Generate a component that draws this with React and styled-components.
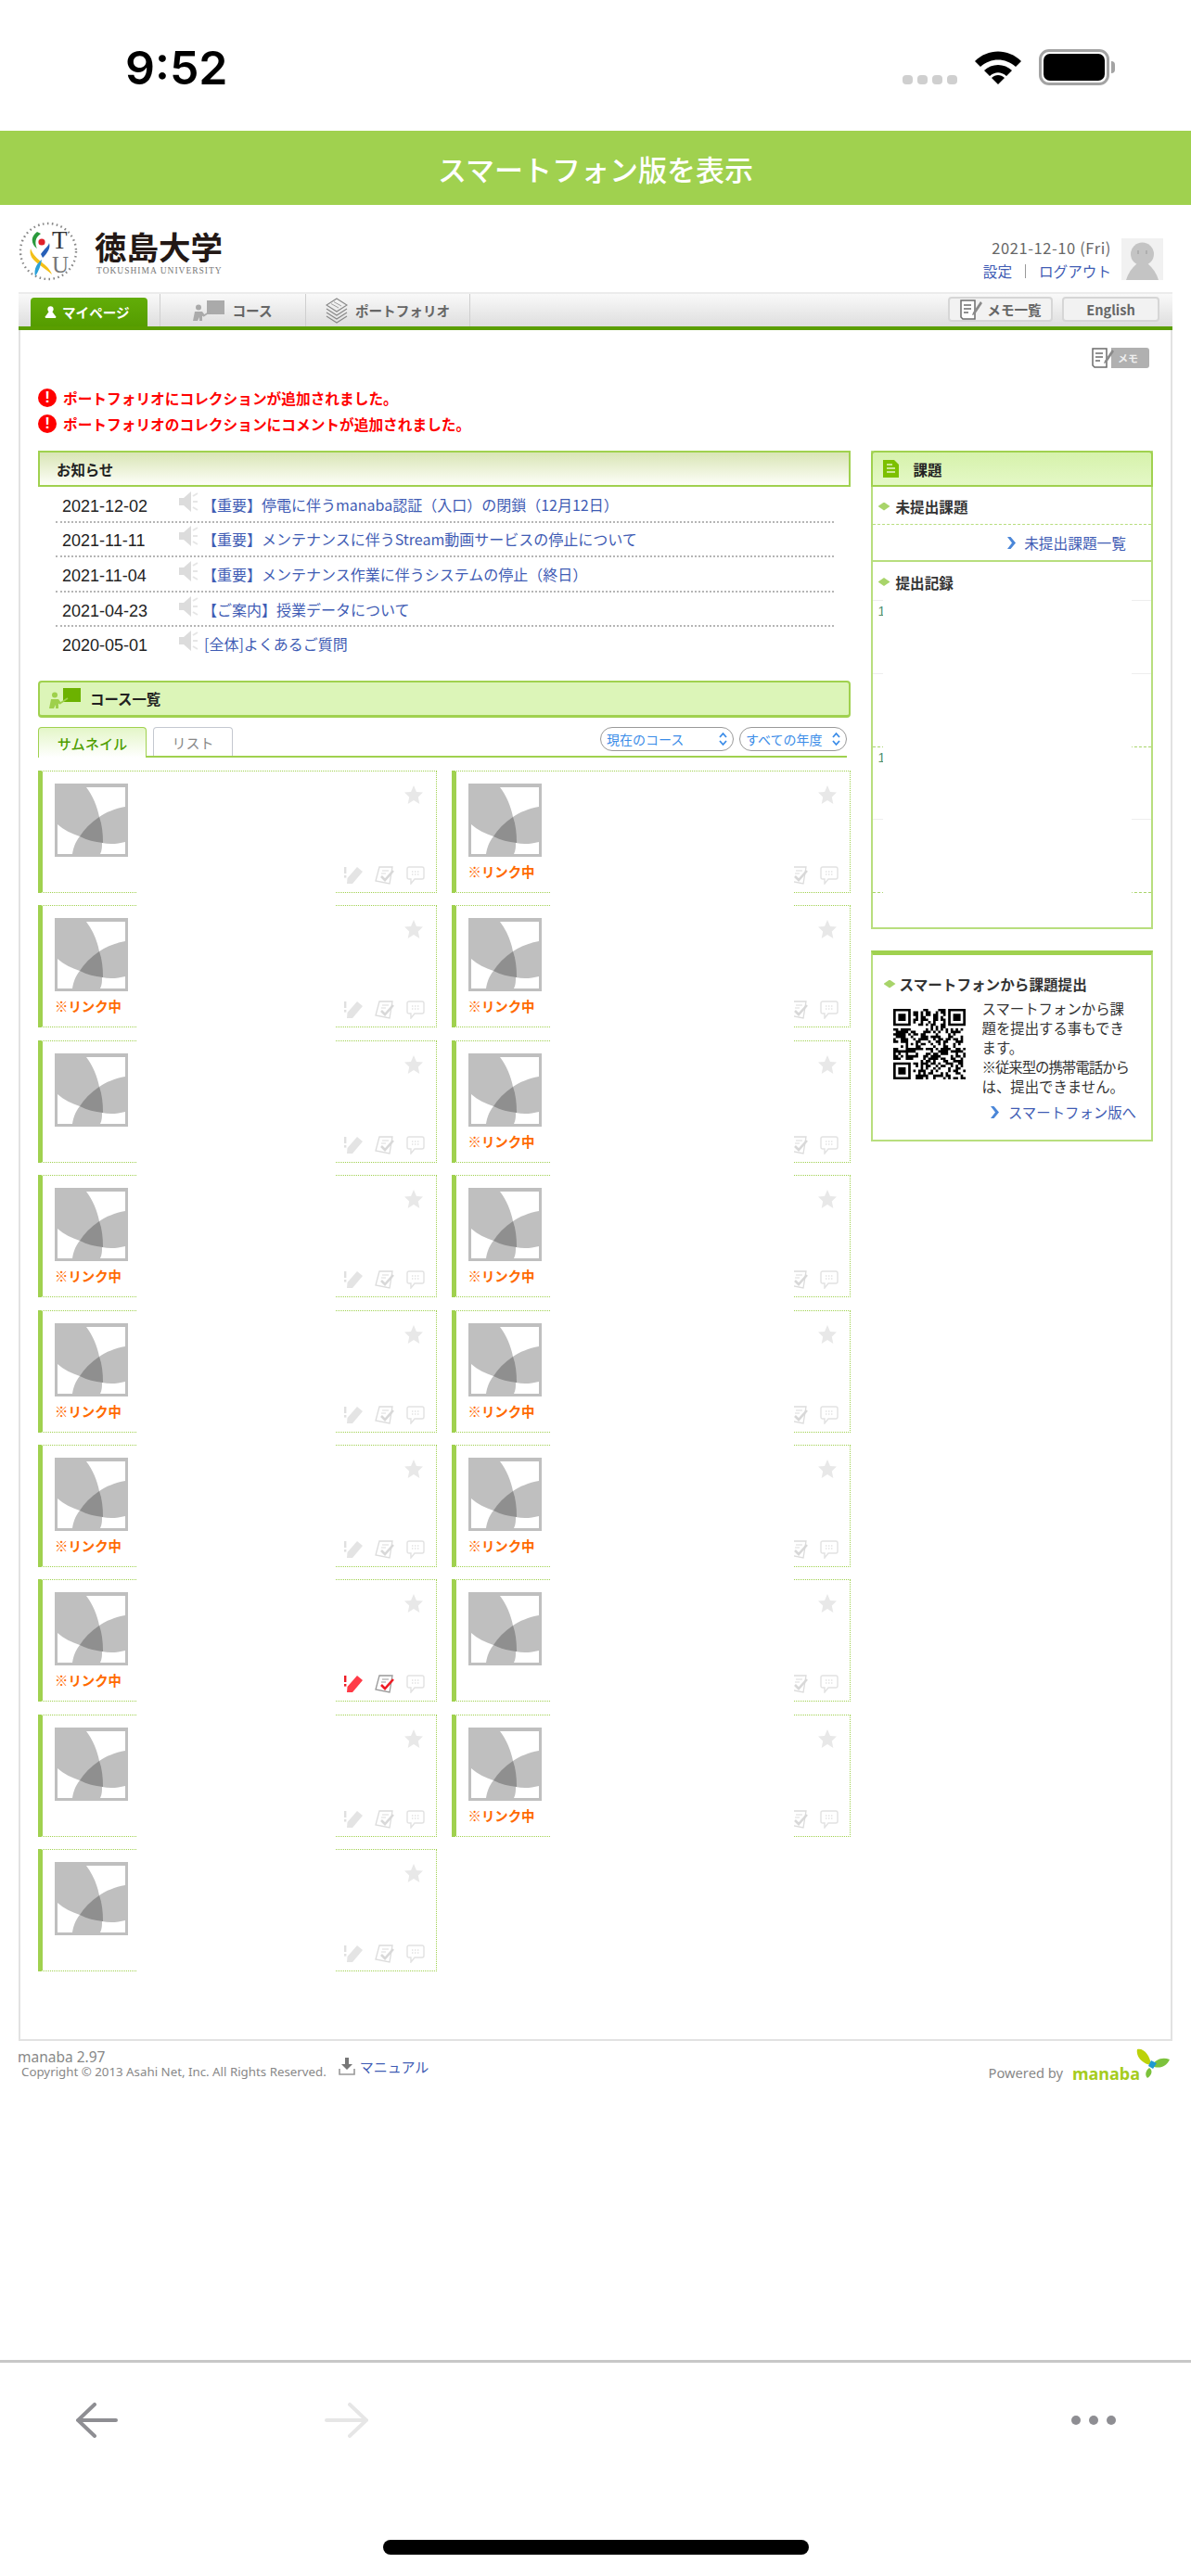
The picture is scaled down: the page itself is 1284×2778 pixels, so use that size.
import styled, { createGlobalStyle } from "styled-components"

const GlobalStyle = createGlobalStyle`
  html, body {
    margin: 0;
    padding: 0;
    background: #fff;
  }
  * { box-sizing: border-box; }
`

const JP = `"Noto Sans CJK JP", "Noto Sans", sans-serif`
const LINK = "#3f5cb4"
const GREEN = "#a0d14f"

// col1 / col2 of the course list: does the card show the link label
const LEFT_CARDS = [false, true, false, true, true, true, true, false, false]
const RIGHT_CARDS = [true, true, true, true, true, true, false, true]

const NEWS = [
  ["2021-12-02", "【重要】停電に伴うmanaba認証（入口）の閉鎖（12月12日）", false],
  ["2021-11-11", "【重要】メンテナンスに伴うStream動画サービスの停止について", false],
  ["2021-11-04", "【重要】メンテナンス作業に伴うシステムの停止（終日）", false],
  ["2021-04-23", "【ご案内】授業データについて", false],
  ["2020-05-01", "[全体]よくあるご質問", true],
]

function StatusIcons() {
  return (
    <StatusRight>
      <Signal>
        <i /><i /><i /><i />
      </Signal>
      <svg width="50" height="37" viewBox="0 0 50 37">
        <path d="M0 12 C14 -2 36 -2 50 12 L44 18 C33 8 17 8 6 18 Z" fill="#000" />
        <path d="M10 22 C18 14 32 14 40 22 L34 28 C28 23 22 23 16 28 Z" fill="#000" />
        <path d="M18 30 C22 26 28 26 32 30 L25 37 Z" fill="#000" />
      </svg>
      <Battery>
        <BatteryFill />
      </Battery>
    </StatusRight>
  )
}

function Logo() {
  return (
    <LogoWrap>
      <svg width="64" height="66" viewBox="0 0 64 66">
        <circle cx="32" cy="33" r="30" fill="none" stroke="#888" strokeWidth="2.4" strokeDasharray="1.6 3.4" />
        <path d="M20 12 C12 18 14 26 20 30 C17 24 18 18 24 14 Z" fill="#2a9a3c" />
        <circle cx="25" cy="23" r="3.6" fill="#e0202a" />
        <path d="M24 36 C28 30 32 28 33 24 C35 30 30 36 26 40 Z" fill="#2860b8" />
        <path d="M13 30 C10 42 22 46 36 58 C32 46 18 44 13 30 Z" fill="#f4c018" />
        <path d="M18 60 C16 52 20 46 25 42 C24 48 22 54 18 60 Z" fill="#2ba0d8" />
        <text x="36" y="30" fontFamily="Liberation Serif" fontSize="27" fill="#333">T</text>
        <text x="36" y="56" fontFamily="Liberation Serif" fontSize="25" fill="#777">U</text>
      </svg>
      <LogoText>
        <LogoName>徳島大学</LogoName>
        <LogoSub>TOKUSHIMA UNIVERSITY</LogoSub>
      </LogoText>
    </LogoWrap>
  )
}

function Person({ color = "#fff", size = 13 }) {
  return (
    <svg width={size} height={size} viewBox="0 0 15 15">
      <circle cx="7.5" cy="4" r="3.6" fill={color} />
      <path d="M5.5 7 H9.5 L14 13 V15 H1 V13 Z" fill={color} />
    </svg>
  )
}

function CourseIcon({ body, board, width = 34, height = 22 }) {
  return (
    <svg width={width} height={height} viewBox="0 0 34 22">
      <rect x="15" y="0" width="19" height="15" fill={board} />
      <path d="M11 17 L20 11" stroke={body} strokeWidth="1.6" />
      <circle cx="6" cy="7.5" r="3" fill={body} />
      <path d="M2 12 H10 L13 16 L10 17 V22 H7 V18 L5 22 H0 Z" fill={body} />
    </svg>
  )
}

function StackIcon() {
  return (
    <svg width="24" height="28" viewBox="0 0 24 28" fill="none" stroke="#888" strokeWidth="1.2">
      <path d="M12 1 L23 8 L12 15 L1 8 Z" />
      <path d="M6 6.5 L14 11 M9 4.5 L17 9" strokeWidth="0.8" />
      <path d="M1 12 L12 19 L23 12" />
      <path d="M1 16 L12 23 L23 16" />
      <path d="M1 20 L12 27 L23 20" />
    </svg>
  )
}

function NoteIcon({ width = 26, height = 22 }) {
  return (
    <svg width={width} height={height} viewBox="0 0 26 22" fill="none" stroke="#6c6c6c" strokeWidth="1.5">
      <path d="M2 1 H17 V21 H4 L2 19 Z" fill="#fff" />
      <path d="M5 6 H13 M5 10 H13 M5 14 H10" />
      <path d="M15 14 L23 2 L25 4 L17 16 L14 17 Z" fill="#8a8a8a" stroke="none" />
    </svg>
  )
}

function NewsIcon() {
  return (
    <svg width="21" height="24" viewBox="0 0 21 24">
      <path d="M0 8 H5 L13 1 V23 L5 16 H0 Z" fill="#dcdcdc" />
      <path d="M15 6 L20 3 M15 12 H20 M15 18 L20 21" stroke="#e6e6e6" strokeWidth="2" />
    </svg>
  )
}

function UpDown({ color = "#3a8ce8" }) {
  return (
    <svg width="9" height="16" viewBox="0 0 9 16" fill="none" stroke={color} strokeWidth="1.8">
      <path d="M1 6 L4.5 2 L8 6 M1 10 L4.5 14 L8 10" />
    </svg>
  )
}

function Chevron() {
  return (
    <svg width="9" height="13" viewBox="0 0 9 13">
      <path d="M0 0 H3.5 L9 6.5 L3.5 13 H0 L5 6.5 Z" fill="#4a86d8" />
    </svg>
  )
}

function Thumb() {
  return (
    <svg width="79" height="79" viewBox="0 0 79 79">
      <rect width="79" height="79" fill="#bfbfbf" />
      <path d="M34 4 H76 V25 C65 27 55 31 48 36 C46 25 41 13 34 4 Z" fill="#fff" />
      <path d="M3 44 C10 50 18 54 27 57 C22 63 20 70 19 76 H3 Z" fill="#fff" />
      <path d="M49 76 C51 72 51 68 51 64 C60 66 68 65 76 63 V76 Z" fill="#fff" />
      <path d="M48 36 C51 44 52 54 52 64 C43 63 35 61 27 57 C32 49 39 42 48 36 Z" fill="#8f8f8f" />
    </svg>
  )
}

function Star() {
  return (
    <svg width="20" height="20" viewBox="0 0 20 20">
      <path d="M10 0 L13 7 L20 7.6 L14.8 12.4 L16.3 20 L10 16 L3.7 20 L5.2 12.4 L0 7.6 L7 7 Z" fill="#e8e8e8" />
    </svg>
  )
}

function Pencil({ alert }) {
  const c = alert ? "#ff3b47" : "#e4e4e4"
  return (
    <svg width="20" height="20" viewBox="0 0 20 20">
      <rect x="0" y="1" width="2.4" height="7" fill={alert ? "#ee1c25" : "#e0e0e0"} />
      <rect x="0" y="10" width="2.4" height="2.6" fill={alert ? "#ee1c25" : "#e0e0e0"} />
      <path d="M14 1 L20 6 L9 19 L3 19 L3.5 13 Z" fill={c} />
    </svg>
  )
}

function Report({ alert }) {
  const c = alert ? "#999" : "#dcdcdc"
  return (
    <svg width="21" height="20" viewBox="0 0 21 20" fill="none">
      <path d="M5 1 H19 L16 19 L1 16 Z" stroke={c} strokeWidth="1.3" fill="#fff" />
      <path d="M8 5 H15 M7 8 H12" stroke={c} strokeWidth="1.2" />
      <path d="M7 11 L11 15 L20 5" stroke={alert ? "#ee1c25" : "#d8d8d8"} strokeWidth="2.6" />
    </svg>
  )
}

function Bubble() {
  return (
    <svg width="20" height="20" viewBox="0 0 20 20" fill="none" stroke="#e2e2e2" strokeWidth="1.4">
      <path d="M3 1 H17 Q19 1 19 3 V12 Q19 14 17 14 H9 L5 19 V14 H3 Q1 14 1 12 V3 Q1 1 3 1 Z" />
      <path d="M6 6 H14 M6 9 H14" strokeDasharray="1.4 1.6" />
    </svg>
  )
}

function CourseCard({ linked, top, wide, alert }) {
  return (
    <Card>
      <CardLeft>
        <Thumb />
        {linked && <LinkLabel>※リンク中</LinkLabel>}
      </CardLeft>
      <CardRight>
        <Star />
        <CardIcons>
          <Pencil alert={alert} />
          <Report alert={alert} />
          <Bubble />
        </CardIcons>
      </CardRight>
      <Blank $top={top} $wide={wide} />
    </Card>
  )
}

// QR pattern: three finder squares, the rest is fixed noise
function qrPath() {
  const n = 29
  let d = ""
  const finder = (x, y) => {
    d += `M${x} ${y}h7v7h-7zM${x + 1} ${y + 1}v5h5v-5zM${x + 2} ${y + 2}h3v3h-3z`
  }
  finder(0, 0)
  finder(n - 7, 0)
  finder(0, n - 7)
  let seed = 7
  for (let y = 0; y < n; y++) {
    for (let x = 0; x < n; x++) {
      const inFinder = (x < 8 && y < 8) || (x >= n - 8 && y < 8) || (x < 8 && y >= n - 8)
      seed = (seed * 1103515245 + 12345) & 0x7fffffff
      if (!inFinder && (seed >> 16) % 2 === 0) d += `M${x} ${y}h1v1h-1z`
    }
  }
  return d
}

function Qr() {
  return (
    <svg width="78" height="76" viewBox="0 0 29 29" preserveAspectRatio="none">
      <path d={qrPath()} fill="#000" fillRule="evenodd" />
    </svg>
  )
}

export default function App() {
  return (
    <Page>
      <GlobalStyle />
      <StatusBar>
        <Time>9:52</Time>
        <StatusIcons />
      </StatusBar>
      <Banner>スマートフォン版を表示</Banner>

      <Header>
        <Logo />
        <UserBox>
          <UserText>
            <DateText>2021-12-10 (Fri)</DateText>
            <UserLinks>
              <Link>設定</Link>
              <Pipe />
              <Link>ログアウト</Link>
            </UserLinks>
          </UserText>
          <Avatar>
            <svg width="45" height="45" viewBox="0 0 45 45">
              <circle cx="22.5" cy="17" r="12.5" fill="#c4c4c4" />
              <path d="M17 27 H28 C34 32 38 38 40 45 H5 C7 38 11 32 17 27 Z" fill="#c4c4c4" />
              <path d="M18 13 V17 M27 13 V17" stroke="#999" strokeWidth="1" />
            </svg>
          </Avatar>
        </UserBox>
      </Header>

      <TabBar>
        <ActiveTab>
          <Person />
          マイページ
        </ActiveTab>
        <Tab $width={157}>
          <CourseIcon body="#aaa" board="#aaa" />
          コース
        </Tab>
        <Tab $width={178}>
          <StackIcon />
          ポートフォリオ
        </Tab>
        <TabButtons>
          <TabButton $width={113}>
            <NoteIcon />
            メモ一覧
          </TabButton>
          <TabButton $width={105}>English</TabButton>
        </TabButtons>
      </TabBar>

      <Main>
        <MemoRow>
          <MemoTag>
            <NoteIcon />
            <MemoLabel>メモ</MemoLabel>
          </MemoTag>
        </MemoRow>

        <Alerts>
          <AlertLine>
            <AlertMark>!</AlertMark>
            ポートフォリオにコレクションが追加されました。
          </AlertLine>
          <AlertLine>
            <AlertMark>!</AlertMark>
            ポートフォリオのコレクションにコメントが追加されました。
          </AlertLine>
        </Alerts>

        <Columns>
          <LeftColumn>
            <NoticeHeading>お知らせ</NoticeHeading>
            <NewsList>
              {NEWS.map(([date, title, tight]) => (
                <NewsRow key={date}>
                  <NewsDate>{date}</NewsDate>
                  <NewsIcon />
                  <NewsLink $tight={tight}>{title}</NewsLink>
                </NewsRow>
              ))}
            </NewsList>

            <CourseHeading>
              <CourseIcon body="#9ed04c" board="#6cb200" />
              コース一覧
            </CourseHeading>
            <TabsRow>
              <ThumbTab>サムネイル</ThumbTab>
              <ListTab>リスト</ListTab>
              <Filters>
                <Filter $width={144}>
                  現在のコース
                  <UpDown />
                </Filter>
                <Filter $width={116}>
                  すべての年度
                  <UpDown />
                </Filter>
              </Filters>
            </TabsRow>

            <CardGrid>
              {LEFT_CARDS.map((linked, i) => (
                <CardPair key={i}>
                  <CourseCard linked={linked} top={i === 0} alert={i === 6} />
                  {i < RIGHT_CARDS.length ? (
                    <CourseCard linked={RIGHT_CARDS[i]} top={i === 0} wide />
                  ) : null}
                </CardPair>
              ))}
            </CardGrid>
          </LeftColumn>

          <RightColumn>
            <TaskPanel>
              <TaskHeading>
                <svg width="17" height="19" viewBox="0 0 17 19">
                  <path d="M0 0 H12 L17 5 V19 H0 Z" fill="#7cc000" />
                  <path d="M4 5 H10 M4 9 H13 M4 13 H13" stroke="#e6f6c8" strokeWidth="1.4" />
                </svg>
                課題
              </TaskHeading>
              <TaskTitle>
                <Diamond />
                未提出課題
              </TaskTitle>
              <TaskLinkRow>
                <Chevron />
                <Link>未提出課題一覧</Link>
              </TaskLinkRow>
              <RecordTitle>
                <Diamond />
                提出記録
              </RecordTitle>
              <Records>
                <RecordRow><RecordDigit>1</RecordDigit></RecordRow>
                <RecordRow />
                <RecordRow><RecordDigit>1</RecordDigit></RecordRow>
                <RecordRow />
                <RecordEnd />
                <RecordBlank />
              </Records>
            </TaskPanel>

            <SmartPanel>
              <SmartTitle>
                <Diamond />
                スマートフォンから課題提出
              </SmartTitle>
              <SmartBody>
                <Qr />
                <SmartText>
                  スマートフォンから課
                  <br />
                  題を提出する事もでき
                  <br />
                  ます。
                  <br />
                  <TightLine>※従来型の携帯電話から</TightLine>
                  <br />
                  は、提出できません。
                </SmartText>
              </SmartBody>
              <SmartLink>
                <Chevron />
                <Link>スマートフォン版へ</Link>
              </SmartLink>
            </SmartPanel>
          </RightColumn>
        </Columns>
      </Main>

      <Footer>
        <FooterLeft>
          <FooterInfo>
            <Version>manaba 2.97</Version>
            <Copyright>Copyright © 2013 Asahi Net, Inc. All Rights Reserved.</Copyright>
          </FooterInfo>
          <Manual>
            <svg width="18" height="19" viewBox="0 0 18 19">
              <path d="M7 0 H11 V7 H15 L9 13 L3 7 H7 Z" fill="#777" />
              <path d="M1 12 V18 H17 V12" fill="none" stroke="#999" strokeWidth="1.6" />
            </svg>
            <Link>マニュアル</Link>
          </Manual>
        </FooterLeft>
        <Powered>
          <PoweredText>Powered by</PoweredText>
          <ManabaText>manaba</ManabaText>
          <svg width="36" height="32" viewBox="0 0 36 32">
            <path d="M1 1 C8 -1 15 8 16 18 C9 18 -1 10 1 1 Z" fill="#bcd20a" />
            <path d="M17 19 C20 12 28 9 36 12 C33 19 25 23 17 19 Z" fill="#7cc23c" />
            <path d="M14 21 C18 23 17 29 12 32 C9 29 10 24 14 21 Z" fill="#7cc23c" />
            <path d="M16 13 L22 16 L18 22 L13 19 Z" fill="#1f9ad0" />
          </svg>
        </Powered>
      </Footer>

      <BrowserBar>
        <BrowserNav>
          <NavArrows>
            <svg width="45" height="38" viewBox="0 0 45 38" fill="none" stroke="#8e8e93" strokeWidth="4" strokeLinecap="round">
              <path d="M20 2 L2 19 L20 36 M2 19 H43" />
            </svg>
            <svg width="47" height="38" viewBox="0 0 47 38" fill="none" stroke="#e6e6e6" strokeWidth="4" strokeLinecap="round">
              <path d="M27 2 L45 19 L27 36 M45 19 H2" />
            </svg>
          </NavArrows>
          <MoreDots>
            <i /><i /><i />
          </MoreDots>
        </BrowserNav>
        <HomeBar />
      </BrowserBar>
    </Page>
  )
}

const CardPair = styled.div`
  display: contents;
`

const Page = styled.div`
  width: 1284px;
  height: 2778px;
  overflow: hidden;
  display: flex;
  flex-direction: column;
  font-family: ${JP};
  color: #333;
`

const StatusBar = styled.div`
  height: 141px;
  padding: 46px 88px 0 135px;
  display: flex;
  justify-content: space-between;
  align-items: flex-start;
`

const Time = styled.div`
  font-family: Inter, sans-serif;
  font-weight: 600;
  font-size: 50px;
  line-height: 54px;
  color: #000;
`

const StatusRight = styled.div`
  margin-top: 7px;
  display: flex;
  align-items: center;
  gap: 19px;
`

const Signal = styled.div`
  margin-top: 27px;
  display: flex;
  gap: 5px;
  i {
    width: 11px;
    height: 10px;
    border-radius: 4px;
    background: #cfcfcf;
  }
`

const Battery = styled.div`
  position: relative;
  width: 76px;
  height: 39px;
  padding: 2px;
  border: 3px solid #a3a3a3;
  border-radius: 11px;
  &::after {
    content: "";
    position: absolute;
    right: -9px;
    top: 10px;
    width: 4px;
    height: 13px;
    background: #a3a3a3;
    border-radius: 0 4px 4px 0;
  }
`

const BatteryFill = styled.div`
  height: 100%;
  background: #000;
  border-radius: 7px;
`

const Banner = styled.div`
  height: 80px;
  background: ${GREEN};
  color: #fff;
  font-size: 31px;
  font-weight: 500;
  display: flex;
  align-items: center;
  justify-content: center;
`

const Header = styled.div`
  height: 94px;
  padding: 17px 30px 0 20px;
  display: flex;
  justify-content: space-between;
`

const LogoWrap = styled.div`
  display: flex;
  gap: 18px;
`

const LogoText = styled.div`
  display: flex;
  flex-direction: column;
`

const LogoName = styled.div`
  font-size: 34.5px;
  font-weight: 700;
  line-height: 38px;
  margin-top: 8px;
  color: #231815;
`

const LogoSub = styled.div`
  font-family: "Liberation Serif", serif;
  font-size: 9.5px;
  line-height: 14px;
  letter-spacing: 1px;
  margin: 1px 0 0 2px;
  white-space: nowrap;
  color: #777;
`

const UserBox = styled.div`
  display: flex;
  gap: 11px;
  padding-top: 19px;
`

const UserText = styled.div`
  display: flex;
  flex-direction: column;
  align-items: flex-end;
  gap: 4px;
`

const DateText = styled.div`
  font-size: 16.5px;
  letter-spacing: 0.6px;
  line-height: 20px;
  color: #666;
`

const UserLinks = styled.div`
  display: flex;
  align-items: center;
  gap: 14px;
  font-size: 15.6px;
  line-height: 22px;
`

const Pipe = styled.span`
  width: 1px;
  height: 15px;
  background: #999;
`

const Link = styled.span`
  color: ${LINK};
`

const Avatar = styled.div`
  width: 45px;
  height: 45px;
  background: #f1f1f1;
`

const TabBar = styled.div`
  height: 41px;
  margin: 0 20px;
  border-top: 2px solid #ececec;
  border-bottom: 4px solid #5a9e00;
  background: linear-gradient(#f9f9f9, #dedede);
  display: flex;
  align-items: stretch;
  font-size: 14.6px;
  font-weight: 700;
  color: #666;
`

const ActiveTab = styled.div`
  width: 126px;
  margin: 4px 13px 0;
  padding-left: 15px;
  border-radius: 4px 4px 0 0;
  background: linear-gradient(#62ad08, #559c00);
  color: #fff;
  display: flex;
  align-items: center;
  gap: 6px;
`

const Tab = styled.div`
  width: ${(p) => p.$width}px;
  border-left: 1px solid #cfcfcf;
  display: flex;
  align-items: center;
  justify-content: center;
  gap: 8px;
  &:nth-child(3) {
    border-right: 1px solid #cfcfcf;
  }
`

const TabButtons = styled.div`
  margin-left: auto;
  padding: 3px 14px 0 0;
  display: flex;
  gap: 10px;
`

const TabButton = styled.div`
  width: ${(p) => p.$width}px;
  height: 27px;
  border: 2px solid #d6d6d6;
  border-radius: 4px;
  background: #f2f2f2;
  display: flex;
  align-items: center;
  justify-content: center;
  gap: 4px;
  font-family: ${JP};
  color: #666;
`

const Main = styled.div`
  height: 1845px;
  margin: 0 20px;
  padding: 19px 19px 0 19px;
  border: 2px solid #e2e2e2;
  border-top: none;
`

const MemoRow = styled.div`
  display: flex;
  justify-content: flex-end;
  padding-right: 4px;
`

const MemoTag = styled.div`
  display: flex;
  width: 63px;
  height: 22px;
  position: relative;
  background: linear-gradient(to right, #fff 22px, #b0b0b0 22px);
  border-radius: 0 3px 3px 0;
`

const MemoLabel = styled.span`
  font-size: 11px;
  font-weight: 700;
  line-height: 22px;
  color: #eee;
  margin-left: 3px;
`

const Alerts = styled.div`
  margin-top: 21px;
  display: flex;
  flex-direction: column;
  gap: 6px;
`

const AlertLine = styled.div`
  display: flex;
  align-items: center;
  gap: 7px;
  height: 22px;
  font-size: 15.7px;
  font-weight: 700;
  color: #f00;
`

const AlertMark = styled.span`
  width: 20px;
  height: 20px;
  border-radius: 50%;
  background: #f00;
  color: #fff;
  font-family: "Liberation Sans", sans-serif;
  font-size: 17px;
  font-weight: 700;
  line-height: 20px;
  text-align: center;
`

const Columns = styled.div`
  margin-top: 18px;
  display: flex;
  gap: 22px;
`

const LeftColumn = styled.div`
  width: 877px;
`

const RightColumn = styled.div`
  width: 305px;
  display: flex;
  flex-direction: column;
  gap: 23px;
`

const NoticeHeading = styled.div`
  height: 39px;
  padding-left: 18px;
  border: 2px solid ${GREEN};
  background: linear-gradient(#d9e5b5, #fdfef8);
  font-size: 15.4px;
  font-weight: 700;
  line-height: 36px;
  color: #222;
`

const NewsList = styled.div`
  margin: 0 18px 0 19px;
  padding-top: 1px;
`

const NewsRow = styled.div`
  height: 37.6px;
  padding-left: 7px;
  display: flex;
  align-items: center;
  border-bottom: 2px dotted #b5b5b5;
  &:last-child {
    border-bottom: none;
    padding-bottom: 2px;
  }
  svg {
    margin-top: -6px;
  }
`

const NewsDate = styled.span`
  width: 126px;
  padding-top: 5px;
  font-family: "Liberation Sans", sans-serif;
  font-size: 18px;
  color: #222;
`

const NewsLink = styled.span`
  margin-left: ${(p) => (p.$tight ? "6px" : "4px")};
  font-size: 16px;
  color: ${LINK};
  white-space: nowrap;
`

const CourseHeading = styled.div`
  margin-top: 20px;
  height: 40px;
  padding-left: 10px;
  border: 2px solid ${GREEN};
  border-bottom-width: 3px;
  border-radius: 4px;
  background: #dcf5b8;
  display: flex;
  align-items: center;
  gap: 10px;
  font-size: 15.4px;
  font-weight: 700;
  color: #222;
`

const TabsRow = styled.div`
  margin-top: 10px;
  width: 872px;
  height: 33px;
  display: flex;
  gap: 7px;
  border-bottom: 2px solid ${GREEN};
`

const ThumbTab = styled.div`
  width: 117px;
  height: 33px;
  border: 1.5px solid ${GREEN};
  border-bottom: none;
  border-radius: 4px 4px 0 0;
  background: linear-gradient(#e4f6c8, #fff);
  color: #4f9e00;
  font-size: 15.2px;
  font-weight: 500;
  line-height: 33px;
  text-align: center;
`

const ListTab = styled.div`
  width: 86px;
  height: 31px;
  border: 1.5px solid #c4c8d0;
  border-bottom: none;
  border-radius: 4px 4px 0 0;
  color: #888;
  font-size: 15px;
  line-height: 31px;
  text-align: center;
`

const Filters = styled.div`
  margin-left: auto;
  display: flex;
  gap: 6px;
`

const Filter = styled.div`
  width: ${(p) => p.$width}px;
  height: 26px;
  padding: 0 6px;
  border: 1.5px solid #999;
  border-radius: 13px;
  display: flex;
  align-items: center;
  justify-content: space-between;
  font-size: 14px;
  color: #3a8ce8;
`

const CardGrid = styled.div`
  margin-top: 14px;
  display: grid;
  grid-template-columns: 430px 430px;
  grid-auto-rows: 132px;
  column-gap: 15.5px;
  row-gap: 13.4px;
`

const Card = styled.div`
  position: relative;
  padding: 13px 12px 8px 13px;
  border-left: 5px solid ${GREEN};
  border-top: 1.5px dotted ${GREEN};
  border-right: 1.5px dotted ${GREEN};
  border-bottom: 1.5px dotted ${GREEN};
  display: flex;
  justify-content: space-between;
`

const CardLeft = styled.div`
  display: flex;
  flex-direction: column;
  gap: 6px;
`

const LinkLabel = styled.span`
  font-size: 14.4px;
  font-weight: 700;
  line-height: 20px;
  color: #ff6a00;
`

const CardRight = styled.div`
  display: flex;
  flex-direction: column;
  align-items: flex-end;
  justify-content: space-between;
  padding: 2px 2px 0 0;
`

const CardIcons = styled.div`
  display: flex;
  margin-right: -2px;
  gap: 13px;
`

// white patch that hides the middle of a card
const Blank = styled.div`
  position: absolute;
  left: 102px;
  width: ${(p) => (p.$wide ? 262 : 214)}px;
  top: ${(p) => (p.$top ? "0" : "-2px")};
  bottom: -2px;
  background: #fff;
`

const TaskPanel = styled.div`
  height: 516px;
  border: 2px solid #b8de7e;
  border-top: none;
`

const TaskHeading = styled.div`
  height: 39px;
  margin: 0 -2px;
  padding-left: 11px;
  border: 2px solid ${GREEN};
  border-radius: 4px 4px 0 0;
  background: linear-gradient(#d6f2ab, #e4f8c6);
  display: flex;
  align-items: center;
  gap: 16px;
  font-size: 15.5px;
  font-weight: 700;
  color: #222;
`

const TaskTitle = styled.div`
  height: 41px;
  padding: 2px 0 0 6px;
  border-bottom: 1px dashed #b8de7e;
  display: flex;
  align-items: center;
  gap: 6px;
  font-size: 15.6px;
  font-weight: 700;
`

const RecordTitle = styled(TaskTitle)`
  height: 41px;
  padding-top: 2px;
  border-bottom: none;
`

const Diamond = styled.i`
  width: 13px;
  height: 9px;
  background: #a8d46a;
  clip-path: polygon(50% 0, 100% 50%, 50% 100%, 0 50%);
`

const TaskLinkRow = styled.div`
  height: 40px;
  padding-right: 27px;
  border-bottom: 2px solid #b8de7e;
  display: flex;
  align-items: center;
  justify-content: flex-end;
  gap: 9px;
  font-size: 15.7px;
`

const Records = styled.div`
  position: relative;
`

const RecordRow = styled.div`
  height: 78.8px;
  padding-left: 6px;
  border-top: 1px solid #eee;
  &:nth-child(3) {
    border-top: 1px dashed #a8d46a;
  }
  font-family: "Liberation Sans", sans-serif;
`

const RecordEnd = styled.div`
  border-top: 1px dashed #a8d46a;
`

const RecordDigit = styled.span`
  font-size: 14px;
  line-height: 22px;
  color: #4f8f6f;
`

const RecordBlank = styled.div`
  position: absolute;
  left: 11px;
  right: 21px;
  top: 0;
  bottom: 0;
  background: #fff;
`

const SmartPanel = styled.div`
  height: 206px;
  padding: 0 12px 0 12px;
  border: 2px solid #b8de7e;
  border-top: 5px solid ${GREEN};
`

const SmartTitle = styled.div`
  margin-top: 19px;
  display: flex;
  align-items: center;
  gap: 4px;
  font-size: 15.6px;
  font-weight: 700;
  line-height: 24px;
  white-space: nowrap;
`

const SmartBody = styled.div`
  margin-top: 15px;
  padding-left: 10px;
  display: flex;
  gap: 18px;
`

const SmartText = styled.div`
  margin-top: -11px;
  font-size: 15.4px;
  line-height: 21px;
  white-space: nowrap;
  color: #333;
`

const TightLine = styled.span`
  letter-spacing: -1px;
`

const SmartLink = styled.div`
  margin-top: 6px;
  padding-right: 4px;
  display: flex;
  justify-content: flex-end;
  align-items: center;
  gap: 10px;
  font-size: 15.4px;
  line-height: 22px;
`

const Footer = styled.div`
  height: 344px;
  padding: 9px 23px 0 19px;
  display: flex;
  justify-content: space-between;
  align-items: flex-start;
`

const FooterLeft = styled.div`
  display: flex;
  gap: 13px;
`

const FooterInfo = styled.div`
  display: flex;
  flex-direction: column;
`

const Version = styled.div`
  font-family: "Noto Sans", sans-serif;
  font-size: 15.5px;
  line-height: 17px;
  color: #888;
`

const Copyright = styled.div`
  font-family: "Noto Sans", sans-serif;
  font-size: 13.3px;
  line-height: 14px;
  margin-left: 4px;
  color: #888;
  white-space: nowrap;
`

const Manual = styled.div`
  margin-top: 7px;
  display: flex;
  align-items: center;
  gap: 5px;
  height: 22px;
  font-size: 15px;
`

const Powered = styled.div`
  margin-top: -3px;
  display: flex;
  align-items: flex-end;
  height: 34px;
`

const PoweredText = styled.span`
  font-family: "Noto Sans", sans-serif;
  font-size: 14.7px;
  line-height: 20px;
  color: #888;
  margin: 0 10px -4px 0;
`

const ManabaText = styled.span`
  font-family: "Noto Sans", sans-serif;
  font-size: 18px;
  font-weight: 700;
  line-height: 22px;
  color: #a6cc1e;
  margin: 0 -4px -6px 0;
`

const BrowserBar = styled.div`
  flex: 1;
  border-top: 3px solid #c8c8c8;
  display: flex;
  flex-direction: column;
  align-items: center;
`

const BrowserNav = styled.div`
  width: 100%;
  margin-top: 43px;
  padding: 0 81px 0 82px;
  display: flex;
  align-items: center;
  justify-content: space-between;
`

const NavArrows = styled.div`
  display: flex;
  gap: 223px;
`

const MoreDots = styled.div`
  display: flex;
  gap: 9px;
  i {
    width: 10px;
    height: 10px;
    border-radius: 50%;
    background: #8e8e93;
  }
`

const HomeBar = styled.div`
  width: 459px;
  height: 16px;
  margin-top: 110px;
  border-radius: 8px;
  background: #000;
`
